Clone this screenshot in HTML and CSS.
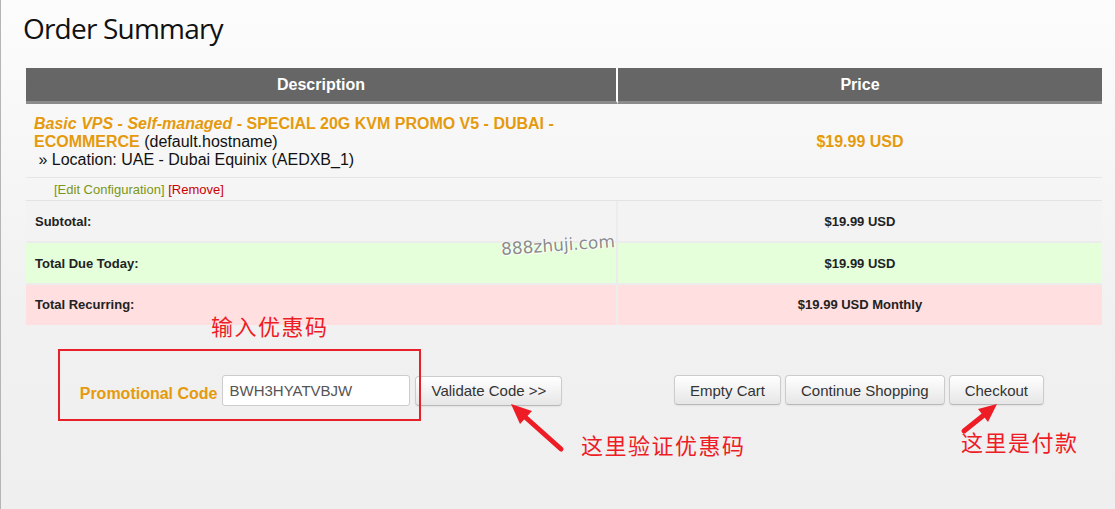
FILE: index.html
```html
<!DOCTYPE html>
<html lang="zh-CN">
<head>
    <meta charset="UTF-8">
    <meta name="viewport" content="width=device-width, initial-scale=1.0">
    <title>Order Summary</title>
    <link rel="stylesheet" href="styles.css">
</head>
<body>
    <div class="page">
        <h1 class="title">Order Summary</h1>

        <table class="cart">
            <thead>
                <tr>
                    <th class="col-desc">Description</th>
                    <th class="col-price">Price</th>
                </tr>
            </thead>
            <tbody>
                <tr class="item">
                    <td class="item-desc">
                        <span class="product"><em>Basic VPS - Self-managed</em> - SPECIAL 20G KVM PROMO V5 - DUBAI - ECOMMERCE</span> (default.hostname)<br>
                        &nbsp;» Location: UAE - Dubai Equinix (AEDXB_1)
                    </td>
                    <td class="item-price">$19.99 USD</td>
                </tr>
                <tr class="config">
                    <td colspan="2">
                        <a href="#" class="edit">[Edit Configuration]</a> <a href="#" class="remove">[Remove]</a>
                    </td>
                </tr>
                <tr class="sum subtotal">
                    <td class="label">Subtotal:</td>
                    <td class="value">$19.99 USD</td>
                </tr>
                <tr class="sum due">
                    <td class="label">Total Due Today:</td>
                    <td class="value">$19.99 USD</td>
                </tr>
                <tr class="sum recurring">
                    <td class="label">Total Recurring:</td>
                    <td class="value">$19.99 USD Monthly</td>
                </tr>
            </tbody>
        </table>

        <div class="cart-actions">
            <form class="promo">
                <label class="promo-label" for="promocode">Promotional Code</label>
                <input type="text" id="promocode" class="promo-input" value="BWH3HYATVBJW">
                <button type="button" class="btn">Validate Code &gt;&gt;</button>
            </form>
            <div class="buttons">
                <button type="button" class="btn">Empty Cart</button>
                <button type="button" class="btn">Continue Shopping</button>
                <button type="button" class="btn">Checkout</button>
            </div>
        </div>
    </div>

    <!-- annotations drawn over the screenshot -->
    <div class="watermark">888zhuji.com</div>
    <div class="note-box"></div>
    <div class="note note-promo">输入优惠码</div>
    <div class="note note-validate">这里验证优惠码</div>
    <div class="note note-pay">这里是付款</div>
    <svg class="arrows" width="1115" height="509" viewBox="0 0 1115 509">
        <line x1="524" y1="416" x2="561" y2="449" />
        <polygon points="511,404 532,411 520,424" />
        <line x1="984" y1="415" x2="964" y2="431" />
        <polygon points="997,404 988,422 978,409" />
    </svg>
</body>
</html>
```

FILE: styles.css
```css
* {
    margin: 0;
    padding: 0;
    box-sizing: border-box;
}

body {
    position: relative;
    min-height: 509px;
    font-family: "Liberation Sans", Arial, sans-serif;
    color: #222;
    background: linear-gradient(#fcfcfc 0%, #f1f1f1 60%, #efefef 100%);
    border-left: 1px solid #b5b5b5;
    overflow: hidden;
}

.page {
    padding-left: 25px;
}

.title {
    font-family: "Open Sans", sans-serif;
    font-weight: 400;
    font-size: 28px;
    line-height: 38px;
    letter-spacing: -0.8px;
    color: #111;
    margin: 9px 0 21px -3px;
}

/* cart table */
.cart {
    width: 1076px;
    border-collapse: separate;
    border-spacing: 0;
    font-size: 16px;
}

.cart th {
    background-color: #666;
    color: #fff;
    font-weight: bold;
    font-size: 16px;
    height: 36px;
    line-height: 33px;
    border-bottom: 3px solid #8c8c8c;
    text-align: center;
}

.col-desc {
    width: 592px;
    border-right: 2px solid #fff;
}

.item td {
    padding: 11px 8px 8px;
    line-height: 18px;
    border-bottom: 1px solid #e6e6e6;
    color: #111;
}

.product {
    color: #e59a0d;
    font-weight: bold;
}

.item .item-price {
    text-align: center;
    color: #e59a0d;
    font-weight: bold;
}

.config td {
    height: 23px;
    padding: 2px 0 0 28px;
    font-size: 13px;
    line-height: 20px;
    border-bottom: 1px solid #e3e3e3;
}

.config a {
    text-decoration: none;
}

.edit {
    color: #7a9616;
}

.remove {
    color: #cc0000;
}

.sum td {
    height: 42px;
    padding: 2px 9px 0;
    font-size: 13px;
    font-weight: bold;
    line-height: 38px;
    color: #222;
    border-bottom: 2px solid #ececec;
}

.sum .label {
    border-right: 2px solid #ececec;
}

.sum .value {
    text-align: center;
}

.subtotal td {
    background-color: #f3f3f3;
}

.due td {
    background-color: #e5ffdb;
}

.recurring td {
    background-color: #ffdfdf;
    border-bottom: none;
    height: 40px;
    padding-top: 0;
}

/* promo + buttons */
.cart-actions {
    display: flex;
    width: 1076px;
    margin-top: 50px;
}

.promo {
    width: 590px;
    display: flex;
    justify-content: center;
    align-items: center;
    gap: 5px;
}

.promo-label {
    color: #e59a0d;
    font-weight: bold;
    font-size: 16px;
    padding-top: 7px;
}

.promo-input {
    width: 188px;
    height: 31px;
    padding: 0 6px;
    font-family: "Liberation Sans", Arial, sans-serif;
    font-size: 15px;
    color: #555;
    background-color: #fff;
    border: 1px solid #ccc;
    border-radius: 3px;
}

.buttons {
    width: 486px;
    display: flex;
    justify-content: center;
    gap: 4px;
}

.btn {
    height: 30px;
    padding: 0 15px;
    font-family: "Liberation Sans", Arial, sans-serif;
    font-size: 15px;
    color: #333;
    background: linear-gradient(#ffffff, #e6e6e6);
    border: 1px solid #cccccc;
    border-bottom-color: #b8b8b8;
    border-radius: 4px;
    box-shadow: 0 1px 2px rgba(0, 0, 0, 0.06);
    cursor: pointer;
}

/* annotations */
.watermark {
    position: absolute;
    left: 500px;
    top: 239px;
    font-family: "DejaVu Sans", sans-serif;
    font-size: 17px;
    color: #8c8c8c;
    text-shadow: 1px 1px 0 #fff, -1px 0 0 #fff;
    transform: rotate(-4deg);
    transform-origin: left center;
}

.note-box {
    position: absolute;
    left: 57px;
    top: 349px;
    width: 363px;
    height: 72px;
    border: 2px solid #e8202a;
}

.note {
    position: absolute;
    font-family: "Noto Sans CJK SC", sans-serif;
    font-size: 22px;
    line-height: 26px;
    letter-spacing: 1.5px;
    color: #ee1c25;
}

.note-promo {
    left: 210px;
    top: 312px;
}

.note-validate {
    left: 580px;
    top: 431px;
}

.note-pay {
    left: 960px;
    top: 428px;
}

.arrows {
    position: absolute;
    left: -1px;
    top: 0;
    pointer-events: none;
}

.arrows line {
    stroke: #ee1c25;
    stroke-width: 5;
    stroke-linecap: round;
}

.arrows polygon {
    fill: #ee1c25;
}
```
